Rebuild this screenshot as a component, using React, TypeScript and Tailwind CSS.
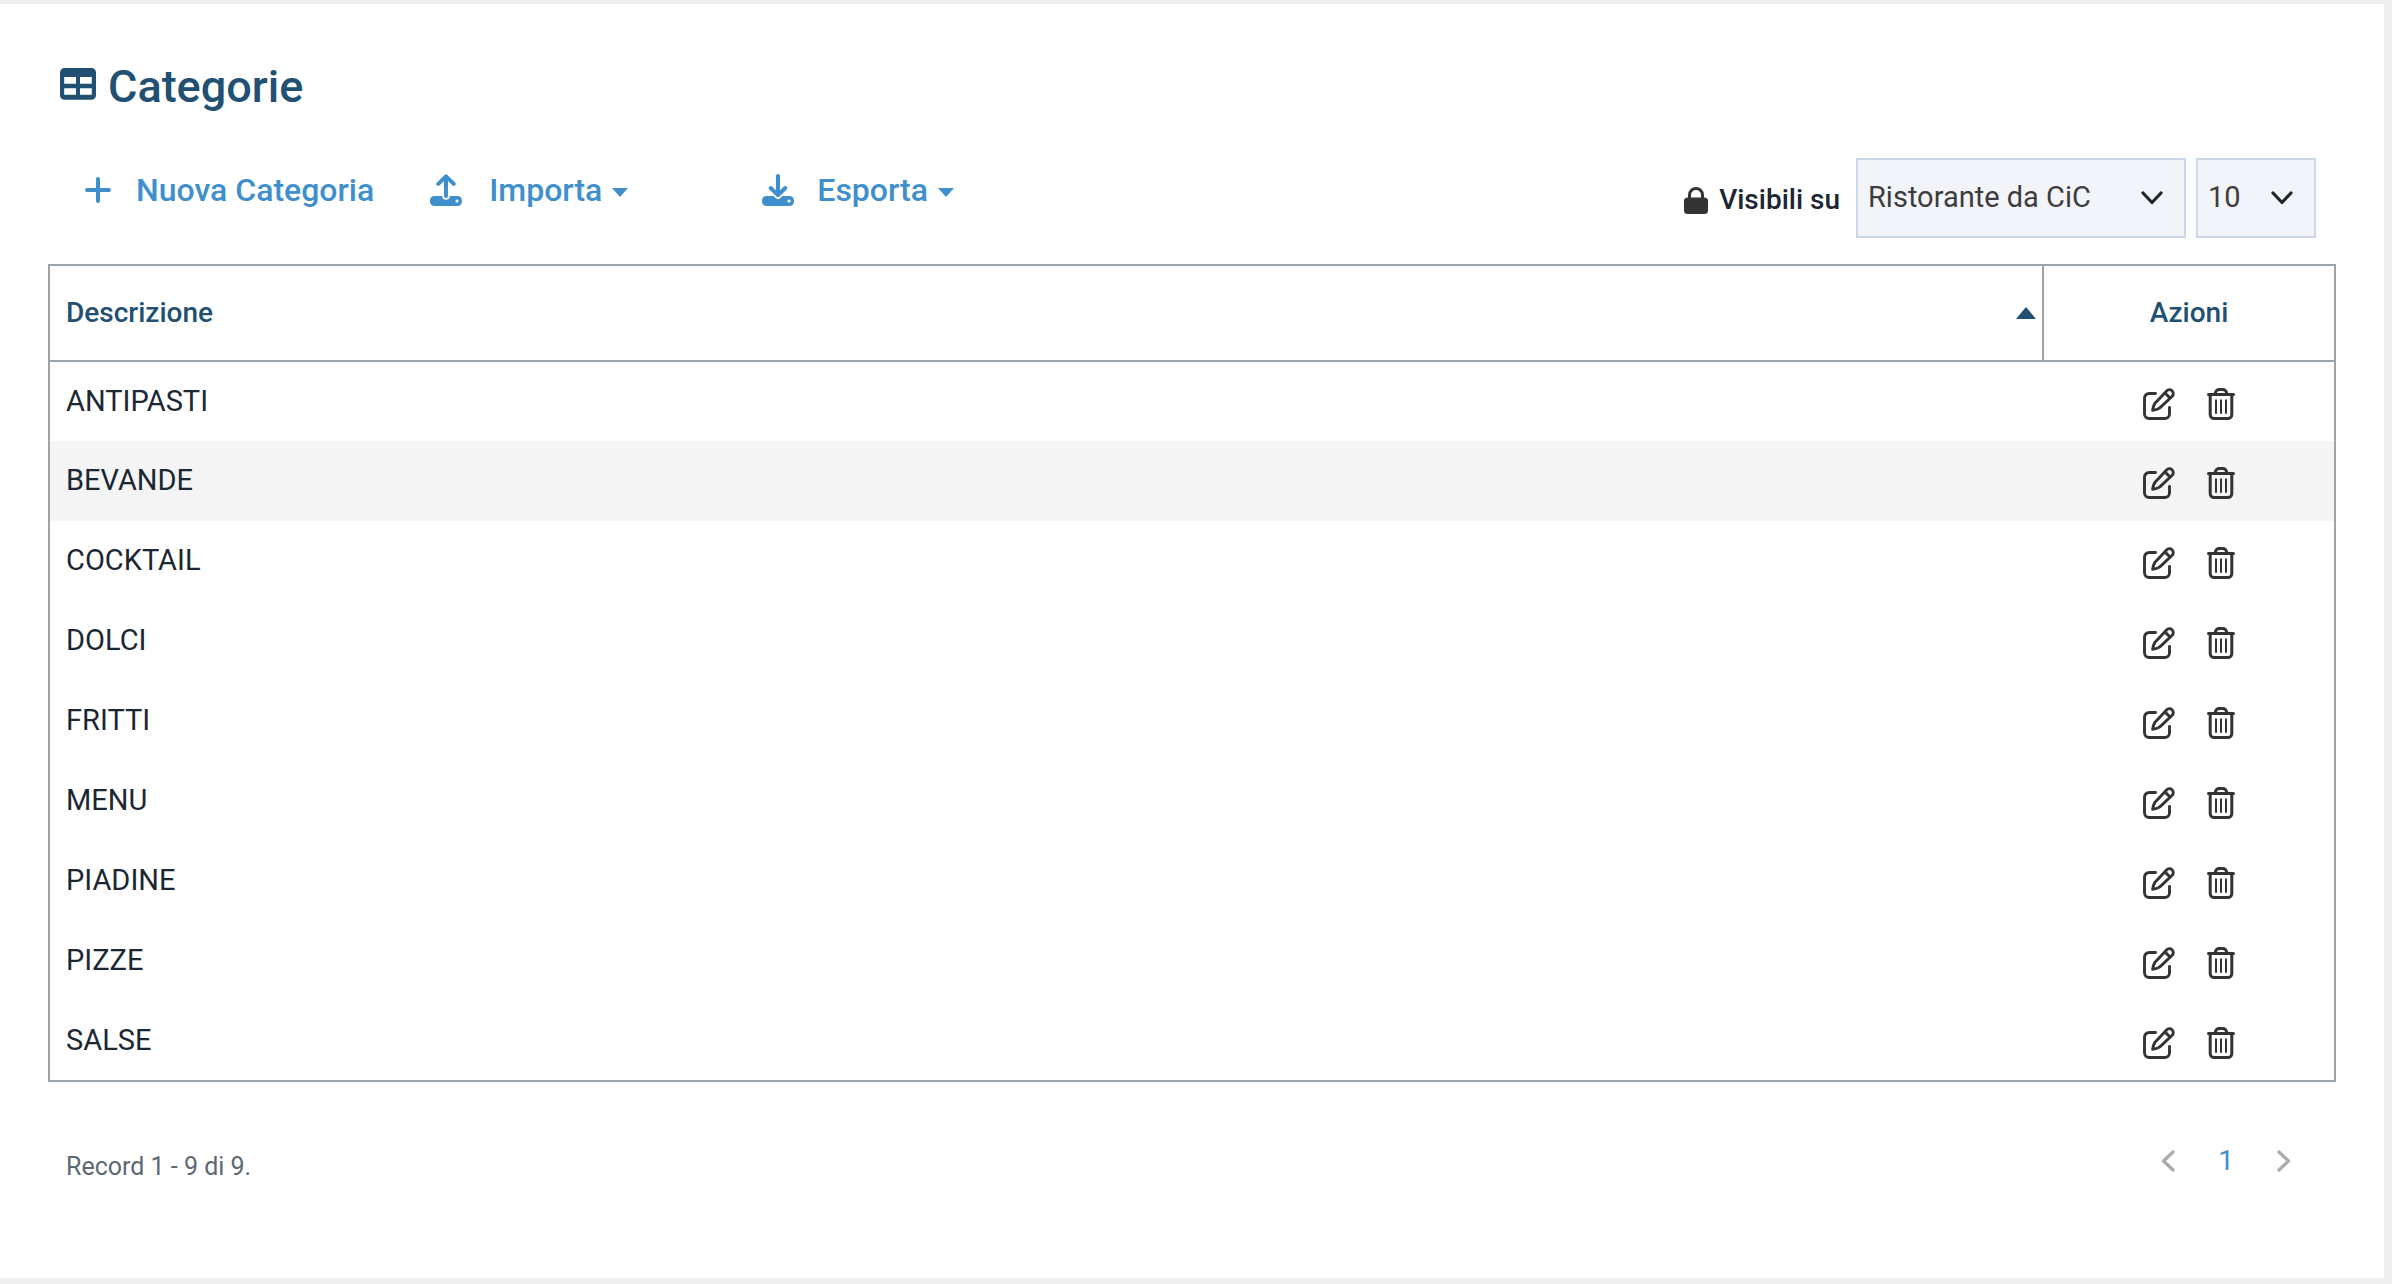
import type { ReactNode } from "react";

const categories = [
  "ANTIPASTI",
  "BEVANDE",
  "COCKTAIL",
  "DOLCI",
  "FRITTI",
  "MENU",
  "PIADINE",
  "PIZZE",
  "SALSE",
];

const activeCategory = "BEVANDE";

function TableIcon() {
  return (
    <svg aria-hidden="true" width="36" height="32" viewBox="0 0 36 32" className="mb-[6px] shrink-0 fill-current">
      <path
        fillRule="evenodd"
        d="M4.5 0h27A4.5 4.5 0 0 1 36 4.5v22.7a4.5 4.5 0 0 1-4.5 4.5h-27A4.5 4.5 0 0 1 0 27.2V4.5A4.5 4.5 0 0 1 4.5 0ZM4.2 9v6.7H16V9ZM20 9v6.7h11.8V9ZM4.200 20.2v6.5H16v-6.5ZM20 20.2v6.5h11.8v-6.5Z"
      />
    </svg>
  );
}

function PlusIcon() {
  return (
    <svg aria-hidden="true" width="26" height="26" viewBox="0 0 26 26" fill="none" stroke="currentColor" strokeWidth="4" strokeLinecap="round" className="shrink-0">
      <path d="M13 2v22M2 13h22" />
    </svg>
  );
}

function TransferIcon({ down = false }: { down?: boolean }) {
  const shaft = down ? "M16 2v19" : "M16 3v19";
  const head = down ? "M8.7 14 16 21.2 23.3 14" : "M8.3 9.9 16 2.3l7.7 7.6";
  return (
    <svg aria-hidden="true" width="32" height="32" viewBox="0 0 32 32" fill="none" strokeLinecap="round" strokeLinejoin="round" className="shrink-0">
      <rect y="22" width="32" height="10" rx="4.500" fill="currentColor" />
      <circle cx="27" cy="27" r="1.600" fill="#fff" />
      <path d={down ? head : shaft} stroke="#fff" strokeWidth="7.500" />
      <path d={shaft} stroke="currentColor" strokeWidth="4" />
      <path d={head} stroke="currentColor" strokeWidth="4" />
    </svg>
  );
}

function Caret() {
  return (
    <svg aria-hidden="true" width="16" height="9" viewBox="0 0 16 9" className="mt-1 ml-[10px] shrink-0 fill-current">
      <path d="M0 0h16L8 9Z" />
    </svg>
  );
}

function LockIcon() {
  return (
    <svg aria-hidden="true" width="24" height="27" viewBox="0 0 24 27" className="mt-1 shrink-0 text-[#333333]">
      <rect y="10.500" width="24" height="16.500" rx="3.500" fill="currentColor" />
      <path d="M5.500 12V8a6.500 6.500 0 0 1 13 0v4" fill="none" stroke="currentColor" strokeWidth="3" />
    </svg>
  );
}

function ChevronDown() {
  return (
    <svg aria-hidden="true" width="22" height="14" viewBox="0 0 22 14" fill="none" stroke="#1b2733" strokeWidth="3.200" strokeLinecap="round" strokeLinejoin="round" className="pointer-events-none absolute top-1/2 right-[23px] -translate-y-1/2">
      <path d="m2 2 9 9.500L20 2" />
    </svg>
  );
}

function EditIcon() {
  return (
    <svg aria-hidden="true" width="32" height="32" viewBox="0 0 32 32" fill="none" stroke="currentColor" strokeWidth="2.900" strokeLinecap="round" strokeLinejoin="round">
      <path d="M12.500 5.500H6.200A4.700 4.700 0 0 0 1.500 10.200v15.600a4.700 4.700 0 0 0 4.700 4.700h15.600a4.700 4.700 0 0 0 4.700-4.700v-6.300" />
      <path d="M9.600 22.400c.3-2.600 1-5 2.200-6.800L23.600 2.900a3.800 3.800 0 0 1 5.600 5.300L16.800 19.900c-2 1.400-4.500 2.200-7.200 2.500Z" />
      <path d="m22.300 5.300 4.300 4.300" />
    </svg>
  );
}

function TrashIcon() {
  return (
    <svg aria-hidden="true" width="28" height="32" viewBox="0 0 28 32" fill="none" stroke="currentColor" strokeWidth="3" strokeLinecap="round" strokeLinejoin="round">
      <path d="M1.500 6.500h25M8 6c.6-3 2-4.500 4.500-4.500h3C18 1.500 19.400 3 20 6" />
      <path d="M3.200 7v19.500a4 4 0 0 0 4 4h13.600a4 4 0 0 0 4-4V7" />
      <path strokeWidth="2" d="M9 12.300v12.700M14 12.300v12.700M19 12.300v12.700" />
    </svg>
  );
}

function PageArrow({ next = false }: { next?: boolean }) {
  return (
    <svg aria-hidden="true" width="14" height="24" viewBox="0 0 14 24" fill="none" stroke="#acacac" strokeWidth="3.400" strokeLinecap="round" strokeLinejoin="round">
      <path d={next ? "m2 3 9.500 9L2 21" : "m12 3-9.500 9 9.500 9"} />
    </svg>
  );
}

function ToolbarButton({ icon, children, menu = false, className }: { icon: ReactNode; children: ReactNode; menu?: boolean; className: string }) {
  return (
    <button type="button" aria-haspopup={menu ? "menu" : undefined} className={`flex h-16 cursor-pointer items-center whitespace-nowrap ${className}`}>
      {icon}
      <span>{children}</span>
      {menu && <Caret />}
    </button>
  );
}

function SelectBox({ id, label, options, className }: { id: string; label?: string; options: string[]; className: string }) {
  return (
    <div className={`relative h-20 ${className}`}>
      <select id={id} aria-label={label} className="h-full w-full appearance-none border-2 border-[#cbd7e6] bg-[#f3f4f9] pr-12 pl-[10px] text-[29px] text-[#3d3d3d]">
        {options.map((option) => (
          <option key={option}>{option}</option>
        ))}
      </select>
      <ChevronDown />
    </div>
  );
}

export default function App() {
  return (
    <div className="flex min-h-screen flex-col bg-[#efefef] pt-1 pr-2 pb-[6px] font-['Roboto',sans-serif] text-[28px] text-[#1b2733]">
      <main className="flex-1 bg-white pt-[51px] pr-12 pl-12">
        <h1 className="flex h-16 items-center gap-3 pl-3 text-[45px] leading-[64px] font-medium text-[#225072]">
          <TableIcon />
          Categorie
        </h1>

        <div className="mt-[39px] flex items-start justify-between">
          <div className="flex pl-[37px] text-[32px] font-medium text-[#3f8fcd]">
            <ToolbarButton icon={<PlusIcon />} className="gap-[25px]">
              Nuova Categoria
            </ToolbarButton>
            <ToolbarButton icon={<TransferIcon />} menu className="ml-14">
              <span className="pl-[27px]">Importa</span>
            </ToolbarButton>
            <ToolbarButton icon={<TransferIcon down />} menu className="ml-[134px]">
              <span className="pl-[23px]">Esporta</span>
            </ToolbarButton>
          </div>

          <div className="flex items-center pr-5">
            <LockIcon />
            <label htmlFor="visible-on" className="mr-4 ml-[11px] pt-[3px] font-medium">
              Visibili su
            </label>
            <SelectBox id="visible-on" options={["Ristorante da CiC"]} className="w-[330px]" />
            <SelectBox id="page-size" label="Record per pagina" options={["10", "25", "50"]} className="ml-[10px] w-[120px]" />
          </div>
        </div>

        <table className="mt-[26px] w-full table-fixed border-collapse border-2 border-[#9da4ab]">
          <colgroup>
            <col />
            <col className="w-[292px]" />
          </colgroup>
          <thead className="text-[#225072]">
            <tr className="h-24 border-b-2 border-[#9da4ab]">
              <th scope="col" aria-sort="ascending" className="border-r-2 border-[#9da4ab] py-0 pr-[6px] pl-4 font-medium">
                <button type="button" className="flex w-full cursor-pointer items-center justify-between font-medium">
                  Descrizione
                  <svg aria-hidden="true" width="20" height="12" viewBox="0 0 20 12" className="fill-current">
                    <path d="M10 0 20 12H0Z" />
                  </svg>
                </button>
              </th>
              <th scope="col" className="p-0 text-center font-medium">
                Azioni
              </th>
            </tr>
          </thead>
          <tbody>
            {categories.map((name) => (
              <tr key={name} className={name === activeCategory ? "h-20 bg-[#f4f4f4]" : "h-20 hover:bg-[#f4f4f4]"}>
                <td className="py-0 pr-4 pl-4 text-[29px]">{name}</td>
                <td className="p-0">
                  <div className="flex items-center justify-center gap-8 pt-1 text-[#333333]">
                    <button type="button" aria-label={`Modifica ${name}`} className="cursor-pointer">
                      <EditIcon />
                    </button>
                    <button type="button" aria-label={`Elimina ${name}`} className="cursor-pointer">
                      <TrashIcon />
                    </button>
                  </div>
                </td>
              </tr>
            ))}
          </tbody>
        </table>

        <div className="mt-[55px] flex items-center justify-between pr-[45px] pl-[18px]">
          <p className="pt-3 text-[25px] leading-9 text-[#5d6873]">Record 1 - 9 di 9.</p>
          <nav aria-label="Paginazione" className="flex items-center gap-[43px] text-[#3f8fcd]">
            <button type="button" aria-label="Pagina precedente">
              <PageArrow />
            </button>
            <a href="#1" aria-current="page">
              1
            </a>
            <button type="button" aria-label="Pagina successiva">
              <PageArrow next />
            </button>
          </nav>
        </div>
      </main>
    </div>
  );
}
